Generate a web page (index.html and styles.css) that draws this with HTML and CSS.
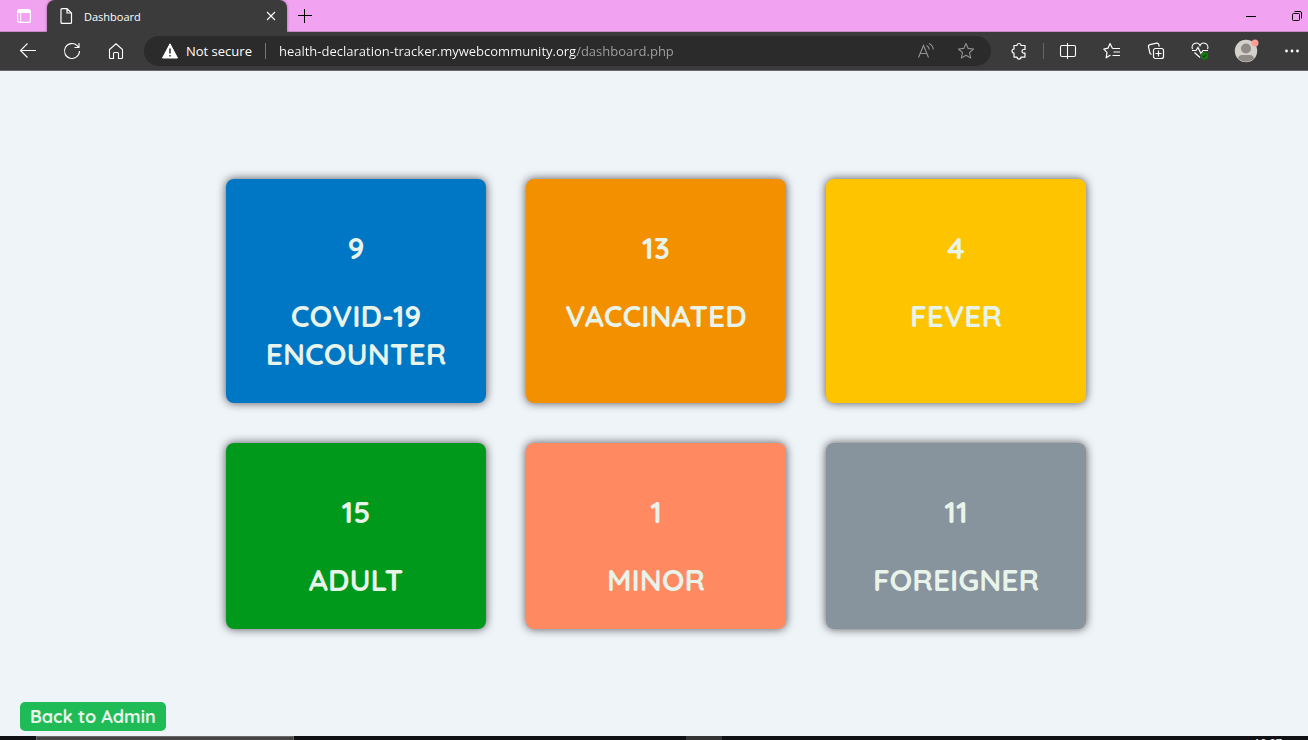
FILE: index.html
```html
<!DOCTYPE html>
<html lang="en">
<head>
<meta charset="utf-8">
<title>Dashboard</title>
<link rel="stylesheet" href="styles.css">
</head>
<body>
<header class="browser">
  <div class="tabstrip">
    <button class="icon-btn strip-menu" aria-label="Tab actions">
      <svg width="16" height="16" viewBox="0 0 16 16"><rect x="1.6" y="1.6" width="12.8" height="12.8" rx="2" fill="none" stroke="#fff" stroke-width="1.2"/><path d="M2 2h12v3H2z" fill="#fff"/><path d="M4.7 5v9" stroke="#fff"/></svg>
    </button>
    <div class="tab">
      <svg width="14" height="18" viewBox="0 0 14 18" fill="none" stroke="#fff" stroke-width="1.2"><path d="M8 1.6H3a1 1 0 0 0-1 1v12.8a1 1 0 0 0 1 1h8.5a1 1 0 0 0 1-1V6zM8 1.6V6h4.5"/></svg>
      <span class="tab-title">Dashboard</span>
      <button class="icon-btn tab-close" aria-label="Close tab">
        <svg width="10" height="10" viewBox="0 0 10 10"><path d="M1 1l8 8M9 1L1 9" stroke="#fff" stroke-width="1.1"/></svg>
      </button>
    </div>
    <button class="icon-btn new-tab" aria-label="New tab">
      <svg width="14" height="14" viewBox="0 0 14 14"><path d="M6.5 0v14M0 6.5h14" stroke="#000"/></svg>
    </button>
    <div class="window-controls">
      <button class="icon-btn" aria-label="Minimize"><svg width="10" height="10" viewBox="0 0 10 10"><path d="M0 5.5h10" stroke="#000"/></svg></button>
      <button class="icon-btn" aria-label="Restore"><svg width="10" height="10" viewBox="0 0 10 10" fill="none" stroke="#000"><rect x=".5" y="2.5" width="7" height="7" rx="1"/><path d="M2.5.5H8a1.5 1.5 0 0 1 1.5 1.5v5.500"/></svg></button>
    </div>
  </div>
  <div class="toolbar">
    <button class="icon-btn" aria-label="Back"><svg width="18" height="18" viewBox="0 0 18 18" fill="none" stroke="#fff" stroke-width="1.1"><path d="M17 8.500H2M8.500 1.500l-7 7 7 7"/></svg></button>
    <button class="icon-btn" aria-label="Refresh"><svg width="18" height="18" viewBox="0 0 18 18" fill="none" stroke="#fff" stroke-width="1.1"><path d="M16.500 9a7.500 7.500 0 1 1-2.300-5.400L16 5.500M16 1v4.500h-4.500"/></svg></button>
    <button class="icon-btn" aria-label="Home"><svg width="18" height="18" viewBox="0 0 18 18" fill="none" stroke="#fff" stroke-width="1.1"><path d="M2.500 7.500L9 1.800l6.500 5.700v8a1 1 0 0 1-1 1h-3v-5a1 1 0 0 0-1-1h-3a1 1 0 0 0-1 1v5h-3a1 1 0 0 1-1-1z"/></svg></button>
    <div class="address">
      <svg width="16" height="16" viewBox="0 0 16 16"><path d="M8 .8L15.500 15H.5z" fill="#fff" stroke="#fff" stroke-linejoin="round"/><path d="M8 5.500v5M8 12v1.500" stroke="#2b2b2b" stroke-width="1.500"/></svg>
      <span class="security">Not secure</span>
      <span class="address-rule"></span>
      <input class="url" type="text" aria-label="Address" value="health-declaration-tracker.mywebcommunity.org/dashboard.php">
      <button class="icon-btn" aria-label="Read aloud"><svg width="18" height="18" viewBox="0 0 18 18" fill="none" stroke="#929292" stroke-width="1.100"><path d="M1.500 15.500L6.500 3.500l5 12M3.300 11.500h6.400M9.500 3.500q2.500 1.200 2.700 4M12 1.500q4 2 4.300 6"/></svg></button>
      <button class="icon-btn" aria-label="Add to favorites"><svg width="18" height="18" viewBox="0 0 18 18" fill="none" stroke="#929292" stroke-width="1.100" stroke-linejoin="round"><path d="M9 1.500l2.200 4.900 5.300.6-4 3.600 1.200 5.400L9 13.300 4.300 16l1.200-5.400-4-3.600 5.300-.6z"/></svg></button>
    </div>
    <button class="icon-btn" aria-label="Extensions"><svg width="18" height="18" viewBox="0 0 18 18" fill="none" stroke="#fff" stroke-width="1.200"><path d="M4 3.500h3a2 2 0 0 1 4 0h4v4h-1.200a1.800 1.800 0 0 0 0 3.600H15v4h-4a2 2 0 0 1-4 0H4v-4a2 2 0 0 1 0-4z" stroke-linejoin="round"/></svg></button>
    <span class="toolbar-rule"></span>
    <button class="icon-btn" aria-label="Split screen"><svg width="18" height="18" viewBox="0 0 18 18" fill="none" stroke="#fff" stroke-width="1.100"><path d="M7 3.500H3a1.500 1.500 0 0 0-1.500 1.500v8A1.500 1.500 0 0 0 3 14.500h4M11 3.500h4a1.500 1.500 0 0 1 1.500 1.500v8a1.500 1.500 0 0 1-1.500 1.500h-4M7 3.500h4M7 14.500h4M8.500 1v16"/></svg></button>
    <button class="icon-btn" aria-label="Favorites"><svg width="18" height="18" viewBox="0 0 18 18" fill="none" stroke="#fff" stroke-width="1.200" stroke-linejoin="round"><path d="M9.500 6.500L7 1.500 5 6.200l-4.200.9 3.200 3.300L3.200 15.800 7.500 13M9.500 6.500H17M10.500 10H17M9.500 13.500H17"/></svg></button>
    <button class="icon-btn" aria-label="Collections"><svg width="18" height="18" viewBox="0 0 18 18" fill="none" stroke="#fff" stroke-width="1.200"><rect x="6.500" y="6.500" width="10" height="10" rx="2"/><path d="M11.500 8.500v6M8.500 11.500h6M4.500 12.500L3 11.500 1.500 5a2 2 0 0 1 1.500-2.300L9.500 1.200a2 2 0 0 1 2.300 1.500l.5 2"/></svg></button>
    <button class="icon-btn" aria-label="Browser essentials"><svg width="18" height="18" viewBox="0 0 18 18" fill="none" stroke="#fff" stroke-width="1.200"><path d="M1.500 7a4 4 0 0 1 7.500-3.500A4 4 0 0 1 16.500 7M1 8.500h4l2-3 3 6 2-3h5M3.500 10.500L9 15.500"/><circle cx="13.500" cy="13.800" r="3.700" fill="#107c10" stroke="none"/><path d="M11.800 13.800l1.200 1.200 2.200-2.300" stroke="#063d06"/></svg></button>
    <button class="icon-btn profile" aria-label="Profile"><svg width="26" height="26" viewBox="0 0 26 26"><circle cx="13" cy="13" r="11.200" fill="#d4d1cc"/><circle cx="13" cy="10.500" r="5" fill="#8f8b87"/><path d="M5 20.300Q6 17 9 17h8q3 0 4 3.300a11 11 0 0 1-16 0z" fill="#8f8b87"/><circle cx="22" cy="5" r="3.500" fill="#ff9d95"/></svg></button>
    <button class="icon-btn" aria-label="Settings and more"><svg width="16" height="16" viewBox="0 0 16 16" fill="#fff"><circle cx="2.500" cy="8" r="1.400"/><circle cx="8" cy="8" r="1.400"/><circle cx="13.500" cy="8" r="1.400"/></svg></button>
  </div>
</header>
<main class="page">
  <section class="cards">
    <article class="card blue"><p>9</p><h2>COVID-19 ENCOUNTER</h2></article>
    <article class="card orange"><p>13</p><h2>VACCINATED</h2></article>
    <article class="card yellow"><p>4</p><h2>FEVER</h2></article>
    <article class="card green"><p>15</p><h2>ADULT</h2></article>
    <article class="card coral"><p>1</p><h2>MINOR</h2></article>
    <article class="card grey"><p>11</p><h2>FOREIGNER</h2></article>
  </section>
  <a class="back" href="#">Back to Admin</a>
</main>
<footer class="taskbar">
  <span class="task-search"></span>
  <span class="task-active"></span>
  <time class="clock">10:07</time>
</footer>
</body>
</html>
```
FILE: styles.css
```css
* { box-sizing: border-box; }
body {
  margin: 0;
  min-height: 100vh;
  display: flex;
  flex-direction: column;
  background: #eff4f9;
  font-family: "Open Sans", "Noto Sans", sans-serif;
}
svg { display: block; flex: none; }
.icon-btn {
  display: flex;
  align-items: center;
  justify-content: center;
  flex: none;
  width: 32px;
  height: 30px;
  padding: 0;
  border: 0;
  background: none;
}
.tabstrip {
  display: flex;
  height: 32px;
  background: #f1a3f1;
  border-bottom: 1px solid #c587c5;
}
.strip-menu { margin: 0 7px 0 8px; height: 32px; }
.tab {
  display: flex;
  align-items: center;
  width: 240px;
  height: 32px;
  padding: 0 0 0 12px;
  background: #3b3b3b;
  border-radius: 8px 8px 0 0;
  color: #fff;
  font-size: 11px;
  box-shadow: 0 0 3px #0006;
}
.tab-title { flex: 1; margin-left: 11px; }
.new-tab { width: 36px; height: 32px; }
.window-controls { display: flex; margin-left: auto; gap: 14px; margin-right: -5px; }
.window-controls .icon-btn { height: 32px; }
.toolbar {
  position: relative;
  display: flex;
  align-items: center;
  gap: 12px;
  height: 39px;
  padding-left: 12px;
  background: #3b3b3b;
  border-bottom: 1px solid #67676a;
}
.address {
  display: flex;
  flex: 1;
  align-items: center;
  min-width: 0;
  height: 30px;
  padding: 0 9px 0 18px;
  border-radius: 15px;
  background: #2b2b2b;
  color: #fff;
  font-size: 13px;
}
.address .icon-btn + .icon-btn { margin-left: 8px; }
.security { margin-left: 8px; white-space: nowrap; }
.address-rule { width: 1px; height: 16px; margin: 0 13px; background: #777; }
.url {
  flex: 1;
  min-width: 0;
  padding: 0;
  border: 0;
  outline: 0;
  font: inherit;
  color: transparent;
  background: linear-gradient(to right, #fff 297px, #a3a3a3 297px);
  background-clip: text;
  -webkit-background-clip: text;
}
.toolbar-rule { width: 1px; height: 16px; margin: 0 -4px; background: #656565; }
.profile { margin: 0 2px; }
.page {
  display: flex;
  flex: 1;
  flex-direction: column;
  align-items: flex-start;
  padding: 108px 20px 5px;
  font-family: Quicksand, Lato, sans-serif;
}
.cards {
  display: grid;
  grid-template-columns: repeat(3, 260px);
  justify-content: center;
  gap: 40px;
  width: 100%;
  padding-left: 4px;
}
.card {
  padding: 50px 30px 30px;
  border-radius: 8px;
  box-shadow: 0 0 10px #000a;
  color: #e8f3ea;
  text-align: center;
}
.card p, .card h2 {
  margin: 0;
  font-size: 30px;
  font-weight: 700;
  line-height: 38px;
}
.card h2 { margin-top: 30px; }
.blue { background: #0077c5; }
.orange { background: #f39000; }
.yellow { background: #ffc400; }
.green { background: #00991c; }
.coral { background: #ff8a62; }
.grey { background: #88949d; }
.back {
  margin-top: auto;
  padding: 3px 10px;
  border-radius: 5px;
  background: #1fbb57;
  color: #e8f3ea;
  font-size: 18px;
  font-weight: 700;
  line-height: 23px;
  text-decoration: none;
}
.taskbar {
  display: flex;
  height: 4px;
  overflow: hidden;
  background: #101114;
}
.task-search { width: 258px; margin-left: 36px; background: #454343; border: 1px solid #686868; border-bottom: 0; }
.task-active { width: 36px; margin-left: 392px; background: #343434; }
.clock { margin-left: auto; margin-right: 26px; color: #fff; font-size: 11px; line-height: 13px; }
```
